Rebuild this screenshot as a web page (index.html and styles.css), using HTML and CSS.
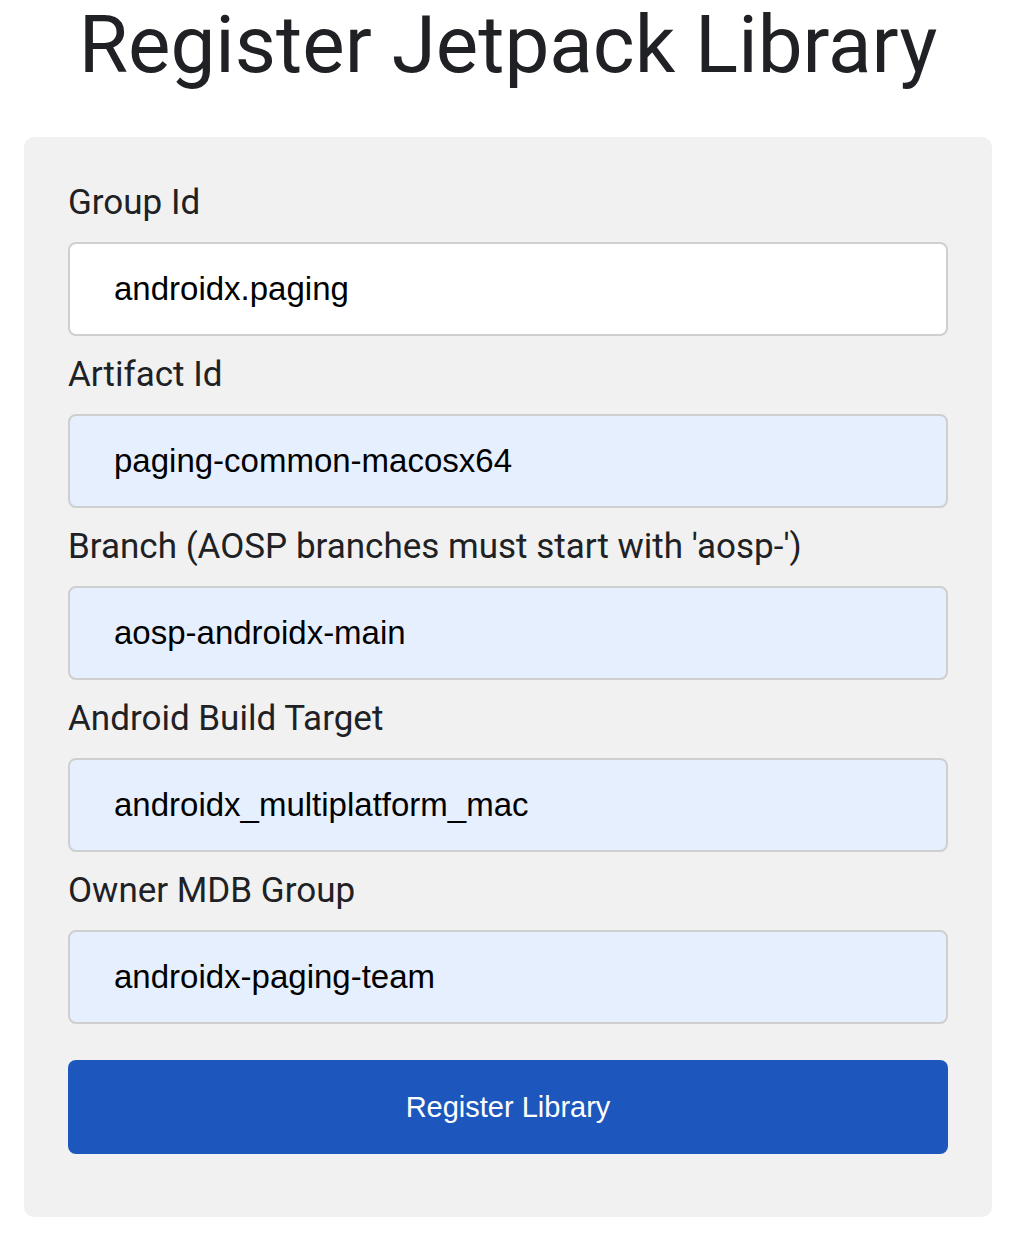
FILE: index.html
```html
<!DOCTYPE html>
<html>
<head>
<meta charset="utf-8">
<link rel="stylesheet" href="styles.css">
</head>
<body>
<h1 class="title">Register Jetpack Library</h1>
<form class="card">
  <label class="label">Group Id</label>
  <div class="field">androidx.paging</div>
  <label class="label">Artifact Id</label>
  <div class="field filled">paging-common-macosx64</div>
  <label class="label">Branch (AOSP branches must start with 'aosp-')</label>
  <div class="field filled">aosp-androidx-main</div>
  <label class="label">Android Build Target</label>
  <div class="field filled">androidx_multiplatform_mac</div>
  <label class="label">Owner MDB Group</label>
  <div class="field filled">androidx-paging-team</div>
  <button type="button" class="submit">Register Library</button>
</form>
</body>
</html>
```
FILE: styles.css
```css
html, body {
  margin: 0;
  padding: 0;
  background: #ffffff;
}
body {
  padding: 0 26px 0 24px;
  font-family: Roboto, "Liberation Sans", sans-serif;
}
.title {
  margin: 0;
  text-align: center;
  font-family: Roboto, sans-serif;
  font-weight: 400;
  font-size: 80px;
  line-height: 90px;
  color: #202124;
  padding-bottom: 47px;
}
.card {
  display: flex;
  flex-direction: column;
  background: #f1f1f1;
  border-radius: 10px;
  padding: 27px 44px 63px;
}
.label {
  display: block;
  font-family: Roboto, sans-serif;
  font-size: 35px;
  line-height: 46px;
  padding: 16px 0;
  color: #202124;
}
.field {
  box-sizing: border-box;
  height: 94px;
  border: 2px solid #cfcfcf;
  border-radius: 8px;
  background: #ffffff;
  padding: 0 44px;
  display: flex;
  align-items: center;
  font-family: "Liberation Sans", Arial, sans-serif;
  font-size: 33px;
  color: #000;
}
.field.filled {
  background: #e6effd;
}
.submit {
  margin-top: 36px;
  height: 94px;
  border: none;
  border-radius: 8px;
  background: #1d57bd;
  color: #ffffff;
  font-family: "Liberation Sans", Arial, sans-serif;
  font-size: 29px;
}
```
